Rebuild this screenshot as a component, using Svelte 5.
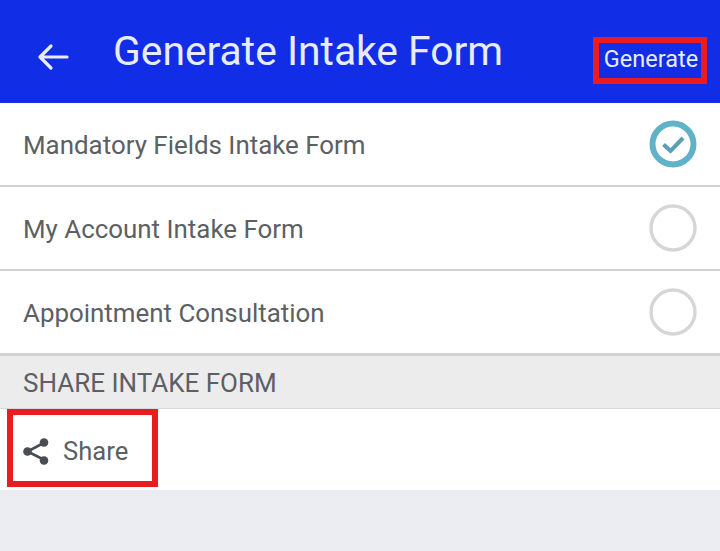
<script lang="ts">
  const forms = [
    { label: "Mandatory Fields Intake Form", selected: true },
    { label: "My Account Intake Form", selected: false },
    { label: "Appointment Consultation", selected: false },
  ];
</script>

<div class="screen">
  <header class="topbar">
    <svg class="back" viewBox="0 0 32 28" aria-hidden="true">
      <path d="M30 14H3M14 3 3 14l11 11" fill="none" stroke="currentColor" stroke-width="3.2" stroke-linecap="round" stroke-linejoin="round"/>
    </svg>
    <h1>Generate Intake Form</h1>
    <button class="generate">Generate</button>
  </header>

  <ul class="forms">
    {#each forms as f}
      <li>
        <span>{f.label}</span>
        {#if f.selected}
          <svg class="radio" viewBox="0 0 48 48" aria-hidden="true">
            <circle cx="24" cy="24" r="20.5" fill="none" stroke="#5fb2c8" stroke-width="6"/>
            <path d="M14.5 24.5 21.5 31 34 18" fill="none" stroke="#5a9fb5" stroke-width="4"/>
          </svg>
        {:else}
          <svg class="radio" viewBox="0 0 48 48" aria-hidden="true">
            <circle cx="24" cy="24" r="22" fill="none" stroke="#d6d6d6" stroke-width="3.4"/>
          </svg>
        {/if}
      </li>
    {/each}
  </ul>

  <div class="section-title">SHARE INTAKE FORM</div>

  <div class="share-row">
    <button class="share">
      <svg viewBox="0 0 28 28" aria-hidden="true">
        <path d="M22.5 5.5 5.5 14.5l17 8.5" fill="none" stroke="#4a4d52" stroke-width="2.6"/>
        <circle cx="22" cy="5.5" r="4.3" fill="#4a4d52"/>
        <circle cx="5.5" cy="14.5" r="4.3" fill="#4a4d52"/>
        <circle cx="22" cy="23.5" r="4.3" fill="#4a4d52"/>
      </svg>
      <span>Share</span>
    </button>
  </div>
</div>

<style>
  :global(body) {
    margin: 0;
    background: #ebedf2;
  }
  .screen {
    width: 720px;
    height: 551px;
    overflow: hidden;
    font-family: Roboto, "Liberation Sans", sans-serif;
    color: #5c5f63;
    background: #ebedf2;
  }
  .topbar {
    height: 103px;
    box-sizing: border-box;
    display: flex;
    align-items: center;
    padding: 0 13px 0 37px;
    background: #112ee6;
    color: #e8ebfa;
  }
  .back {
    width: 32px;
    height: 28px;
    margin-top: 10px;
    flex: none;
  }
  h1 {
    margin: 0 0 0 44px;
    flex: 1;
    font-size: 40.8px;
    font-weight: 400;
    line-height: 1;
  }
  .generate {
    width: 114px;
    height: 47px;
    margin-top: 18px;
    padding: 0 0 3px 2px;
    box-sizing: border-box;
    border: 6px solid #e91c21;
    background: none;
    color: inherit;
    font: 400 23.5px Roboto, sans-serif;
  }
  .forms {
    margin: 0;
    padding: 0;
    list-style: none;
    background: #fff;
  }
  .forms li {
    height: 82px;
    display: flex;
    align-items: center;
    justify-content: space-between;
    padding: 0 23px 0 23px;
    border-bottom: 2px solid #d2d2d2;
    font-size: 25.9px;
  }
  .forms li span {
    padding-top: 2px;
  }
  .radio {
    width: 48px;
    height: 48px;
  }
  .section-title {
    height: 54px;
    box-sizing: border-box;
    display: flex;
    align-items: center;
    padding: 2px 0 0 23px;
    border-top: 1px solid #d2d2d2;
    border-bottom: 1px solid #d9d9d9;
    background: #ececec;
    font-size: 26px;
  }
  .share-row {
    height: 81px;
    background: #fff;
  }
  .share {
    width: 151px;
    height: 78px;
    margin-left: 7px;
    padding: 5px 0 0 9px;
    box-sizing: border-box;
    display: flex;
    align-items: center;
    gap: 13px;
    border: 6px solid #e91c21;
    background: none;
    color: inherit;
    font: 400 25.6px Roboto, sans-serif;
  }
  .share svg {
    width: 28px;
    height: 28px;
    flex: none;
  }
</style>
